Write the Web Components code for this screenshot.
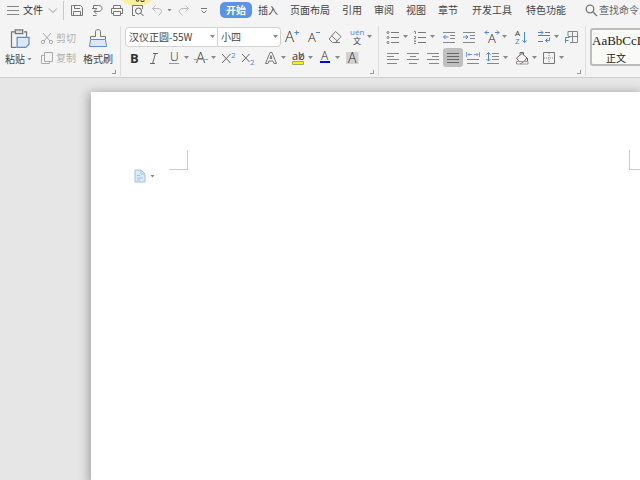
<!DOCTYPE html>
<html lang="zh-CN">
<head>
<meta charset="utf-8">
<title>文字文稿</title>
<style>
html,body{height:100%}
body{margin:0;overflow:hidden;background:#e6e6e6;color:#444;font:10px/16px "Noto Sans CJK SC",sans-serif}
</style>
</head>
<body>
<writer-app></writer-app>
<script>
const L = (d, c = '#777', w = 1) => `<path d="${d}" stroke="${c}" stroke-width="${w}" fill="none"/>`;
const T = (s, x, y, size, c = '#444', extra = '') => `<text x="${x}" y="${y}" font-size="${size}" fill="${c}" font-family="Open Sans,Noto Sans CJK SC,sans-serif" font-weight="300" ${extra}>${s}</text>`;
const BLUE = '#4a86dc';
const ICONS = {
  menu: L('M2 4.5H14M2 8.5H14M2 12.5H14', '#888'),
  chevron: L('M4 6.5L8 10.5L12 6.5', '#999'),
  save: L('M3.5 3.5H11.5L13.5 5.5V13.5H2.5V3.5ZM5.5 3.5V6.5H11M4.5 13V9.500H11.500V13', '#777'),
  exportdoc: L('M4.500 6V3.500H9.500C12 3.500 13 4.800 13 6.500S11.500 9.500 9.500 9.500H5M7.500 7L5 9.500L7.500 12M3 6.500H8M4 13.500H7.500', '#777'),
  print: L('M4.500 6V3.500H11.500V6M4.500 11.500H2.500V6.500H13.500V11.500H11.500M4.500 9.500H11.500V13.500H4.500Z', '#777'),
  preview: L('M6 13.500H3.500V3.500H13.500V7', '#777') + '<circle cx="9.500" cy="9" r="3" fill="none" stroke="#666"/>' + L('M11.700 11.200L14.500 14', '#666'),
  undo: L('M6.500 3.500L3.500 6.500L6.500 9.500M3.500 6.500H9C12 6.500 13.500 9 12 11L9.500 13.500', '#bbb'),
  redo: L('M9.500 3.500L12.500 6.500L9.500 9.500M12.500 6.500H7C4 6.500 2.500 9 4 11L6.500 13.500', '#bbb'),
  more: L('M5 6.500H11', '#777') + L('M5.500 8.500L8 11L10.500 8.500', '#777'),
  search: '<circle cx="7" cy="7" r="3.800" fill="none" stroke="#777" stroke-width="1.300"/>' + L('M9.800 9.800L14 14', '#777', 1.3),
  cut: L('M4 3L11 11M12 3L5 11', '#aaa') + '<g fill="none" stroke="#aaa"><circle cx="4" cy="12" r="1.700"/><circle cx="12" cy="12" r="1.700"/></g>',
  copy: L('M5.500 2.500H13.500V11.500H5.500ZM5 5.500H2.500V13.500H10.500V12', '#aaa'),
  grow: T('A', 2, 13, 15, '#222') + L('M11.500 3.500H16M13.700 1.500V6', BLUE),
  shrink: T('A', 3, 13, 13, '#222') + L('M11 3.500H15', BLUE),
  eraser: L('M8.500 2.500L14 7.500L8.500 13.500H5.500L2 10ZM4.500 6.800L10.300 12M8 13.500H13', '#777'),
  pinyin: T('<tspan x="1" y="6" fill="#4a86dc" font-weight="400">uén</tspan>', 1, 6, 8) + T('文', 4, 15, 8, '#444', 'style="font-weight:400"'),
  bold: T('B', 4, 13, 13, '#333', 'style="font-weight:700"'),
  italic: L('M7 3.500H12M4 13.500H9M9.500 3.500L6.500 13.500', '#666'),
  underline: T('U', 4, 11, 12, '#222') + L('M3 13.500H13', '#8794ea'),
  strike: T('A', 3, 13, 15, '#222') + L('M1 9.500H15', '#e58b72'),
  sup: L('M2 4L10.500 13M10.500 4L2 13', '#666') + T('2', 11, 8, 8, BLUE, 'style="font-weight:400"'),
  sub: L('M2 4L9.500 12M9.500 4L2 12', '#666') + T('2', 10, 15, 8, BLUE, 'style="font-weight:400"'),
  effect: L('M2.500 13.500L7 2.500H9L13.500 13.500H11L10 11H6L5 13.500ZM7 8.500L8 5.500L9 8.500Z', '#777'),
  highlight: '<path d="M2.500 11.500H13.500V14.500H2.500Z" fill="#fff200" stroke="#a8a860"/>' + T('ab', 2, 10, 11, '#333', 'style="font-weight:400"') + L('M13.500 3L9.500 9.500', '#666', 1.3),
  color: T('A', 4, 10, 12, '#222') + '<path d="M3 11H13V13H3Z" fill="#0000f0"/>',
  shade: '<path d="M2 2H14.500V14H2Z" fill="#d2d2d2"/>' + T('A', 4, 13, 14, '#222'),
  bullets: L('M6 3.500H14M6 8.500H14M6 13.500H14') + '<g fill="none" stroke="#777"><circle cx="3" cy="3.500" r="1"/><circle cx="3" cy="8.500" r="1"/><circle cx="3" cy="13.500" r="1"/></g>',
  numbers: L('M6 3.500H14M6 8.500H14M6 13.500H14') + L('M2 2.500H3.500V5M2 7.500H3.500V9.500H2M2 12.500H4M2 14.500H4M3 10.500V13', '#888'),
  outdent: L('M2 3.500H14M9 6.500H14M9 9.500H14M2 13.500H14', '#888') + L('M7.500 8H2.500M4.500 6L2.500 8L4.500 10', BLUE),
  indent: L('M2 3.500H14M9 6.500H14M9 9.500H14M2 13.500H14', '#888') + L('M2 8H7M5 6L7 8L5 10', BLUE),
  scale: T('A', 4, 14, 13, '#222') + L('M1 3.500H5M3 1.500L1 3.500L3 5.500M15 3.500H11M13 1.500L15 3.500L13 5.500', BLUE),
  sort: T('A', 2, 7, 8, '#333', 'style="font-weight:400"') + T('Z', 2, 15, 8, BLUE, 'style="font-weight:400"') + L('M11.500 3V13.500M9.500 11.500L11.500 13.500L13.500 11.500', BLUE),
  breaks: L('M9 3.500H14M2 6.500H14M2 12.500H7') + L('M2 3.500H7M5 1.500L7 3.500L5 5.500M13.500 8.500V11.500H9.500M11.500 9.500L9.500 11.500L11.500 13.500', BLUE),
  table: L('M5 7V2.500H14.500V13.500H7M9.500 2.500V13.500M5 7.500H14.500', '#888') + L('M2.500 14V8.500H6.500M2.500 11.500H5.500', BLUE),
  left: L('M2 3.500H14M2 6.500H9M2 9.500H14M2 13.500H12', '#888'),
  center: L('M2 3.500H14M5 6.500H11M2 9.500H14M4 13.500H12', '#888'),
  right: L('M2 3.500H14M7 6.500H14M2 9.500H14M4 13.500H14', '#888'),
  justify: L('M2 3.500H14M2 6.500H14M2 9.500H14M2 12.500H14', '#666'),
  spread: L('M2 9.500H14M2 13.500H14', '#888') + L('M1.500 2V7M14.500 2V7M3 4.500H7M4.500 3L3 4.500L4.500 6M9 4.500H13M11.500 3L13 4.500L11.500 6', '#6fa0e4'),
  spacing: L('M7 3.500H14M7 6.500H14M7 9.500H14M2 13.500H14', '#888') + L('M3.500 2.500V11M1.500 4.500L3.500 2.500L5.500 4.500M1.500 9L3.500 11L5.500 9', BLUE),
  fill: L('M6 4.500V2.500H9.500V5M2.500 8L8 3.500L13 8L10 11.500H5ZM13.500 8V11', '#666') + L('M2.500 11.500H14V14H2.500Z', '#999') + L('M6 14L10 11.500', '#e26b5b'),
  border: L('M2.500 2.500H13.500V13.500H2.500Z', '#777') + '<path d="M8 3V13M3 8H13" stroke="#888" stroke-dasharray="1 1"/>',
  paste: '<g transform="scale(1.250)">' + L('M5 3H2V15.500H6M12 3H14V7', '#777') + '<path d="M5 1.500H11V4.500H5Z" fill="#ddd" stroke="#777"/><path d="M6.500 7.500H16V13L13.500 15.500H6.500Z" fill="#dce8f8" stroke="#5a8cdc"/></g>',
  painter: '<path d="M2.500 11.500H17.500L18.500 18.500H1.500Z" fill="#dce8f8" stroke="#5a8cdc"/>' + L('M2.500 11V8.500H7.500V3.500C7.500 1 12.500 1 12.500 3.500V8.500H17.500V11', '#777'),
  doc: '<path d="M3 2H9L13 6V14H3Z" fill="#dcebf8" stroke="#9dc0e4"/>' + L('M9 2V6H13M5 7.500H8M5 10H11M5 12H8', '#9dc0e4')
};

function define(name, css, html) {
  customElements.define(name, class extends HTMLElement {
    connectedCallback() {
      if (this.shadowRoot) return;
      const t = document.createElement('template');
      t.innerHTML = `<style>*{box-sizing:border-box}${css}</style>${typeof html === 'function' ? html(this) : html}`;
      this.attachShadow({ mode: 'open' }).append(t.content.cloneNode(true));
    }
  });
}

define('ui-icon', ':host{display:block;flex:none;width:16px;height:16px}:host([large]){width:20px;height:20px}svg{display:block;width:100%;height:100%;overflow:visible}',
  el => `<svg viewBox="0 0 ${el.hasAttribute('large') ? '20 20' : '16 16'}" aria-hidden="true">${ICONS[el.getAttribute('name')]}</svg>`);

define('ui-caret', ':host{display:block;flex:none;width:5px;height:3px;background:#888;clip-path:polygon(0 0,100% 0,50% 100%)}', '');

define('tool-button', `:host{display:block;flex:none}
button{display:flex;align-items:center;width:20px;height:19px;padding:0 2px;border:0;border-radius:3px;background:none}
:host([split]) button{width:27px;padding-right:0;gap:2px}
:host([pressed]) button{background:#bfbfbf}`,
  el => `<button type="button" aria-label="${el.getAttribute('label')}"><ui-icon name="${el.getAttribute('icon')}"></ui-icon>${el.hasAttribute('split') ? '<ui-caret></ui-caret>' : ''}</button>`);

define('label-button', `:host{display:block;flex:none}
button{display:flex;align-items:center;gap:1px;padding:0;border:0;background:none;color:inherit;font:inherit;line-height:20px;white-space:nowrap}
:host([stacked]) button{flex-direction:column;gap:0}
:host([stacked]) ui-icon{margin-bottom:1px}
span{display:flex;align-items:center;gap:2px}
button:disabled{color:#b0b0b0}`,
  el => `<button type="button" ${el.hasAttribute('disabled') ? 'disabled' : ''}><ui-icon name="${el.getAttribute('icon')}" ${el.hasAttribute('stacked') ? 'large' : ''}></ui-icon><span><slot></slot>${el.hasAttribute('split') ? '<ui-caret></ui-caret>' : ''}</span></button>`);

define('ui-combo', `:host{display:flex;align-items:center;background:#fff;border:1px solid #d2d2d2;height:20px}
:host([start]){width:93px;margin-left:1px;border-radius:4px 0 0 4px}
:host([end]){width:63px;border-left:0;border-radius:0 4px 4px 0}
select{appearance:none;flex:1;min-width:0;height:18px;padding:0 0 0 3px;border:0;background:none;color:#444;font:inherit}
ui-caret{margin-right:2px}`,
  el => `<select aria-label="${el.getAttribute('label')}"><option>${el.getAttribute('value')}</option></select><ui-caret></ui-caret>`);

define('tool-row', ':host{display:flex;align-items:center;height:21px}', '<slot></slot>');
define('tool-set', ':host{display:flex;align-items:center}', '<slot></slot>');

define('ribbon-group', `:host{display:flex;flex-direction:column;flex:none;height:50px;border-right:1px solid #dedede}
i{display:block;align-self:flex-end;width:4px;height:4px;margin:2px 4px 0 0;border:solid #999;border-width:0 1px 1px 0}`,
  '<slot></slot><i></i>');

define('ribbon-tab', `:host{display:block;flex:none}
button{display:block;height:16px;padding:0;border:0;border-radius:5px;background:none;color:inherit;font:inherit;line-height:16px;white-space:nowrap}
:host([selected]) button{padding:0 6px;background:#5b93e6;color:#fff;font-weight:700}`,
  el => `<button type="button" role="tab" aria-selected="${el.hasAttribute('selected')}"><slot></slot></button>`);

define('title-bar', `:host{display:flex;align-items:center;height:20px;padding-left:5px;position:relative}
.file{display:flex;align-items:center;gap:2px;padding:0 2px 0 0;height:19px;border:0;border-right:1px solid #c8c8c8;background:none;font:inherit;color:#333;flex:none}
.quick{display:flex;flex:none;position:relative;margin-left:3px}
.tabs{display:flex;flex:none;align-items:center;gap:12px;margin-left:6px}
.first{display:flex;gap:6px}
.wide{display:flex;gap:14px;margin-left:2px}
label{display:flex;align-items:center;flex:1;min-width:0;margin-left:17px}
input{flex:1;min-width:0;width:0;padding:0;border:0;background:none;font:inherit;color:#666}
input::placeholder{color:#666;opacity:1}
.pointer{position:absolute;left:122px;top:0;width:30px;height:6px}`,
`<svg class="pointer" viewBox="0 0 30 6" aria-hidden="true"><path d="M0 0H30C27 4 22 6 15 6S3 4 0 0Z" fill="#f6f0a0"/><path d="M14 0H17L15.500 2ZM19 0V1.500H22V0" fill="none" stroke="#554" /></svg>
<button class="file" type="button"><ui-icon name="menu"></ui-icon>文件<ui-icon name="chevron"></ui-icon></button>
<div class="quick"><tool-button icon="save" label="保存"></tool-button><tool-button icon="exportdoc" label="输出"></tool-button><tool-button icon="print" label="打印"></tool-button><tool-button icon="preview" label="打印预览"></tool-button><tool-button icon="undo" label="撤销" split></tool-button><tool-button icon="redo" label="恢复"></tool-button><tool-button icon="more" label="自定义"></tool-button></div>
<nav class="tabs" role="tablist"><div class="first"><ribbon-tab selected>开始</ribbon-tab><ribbon-tab>插入</ribbon-tab></div><ribbon-tab>页面布局</ribbon-tab><ribbon-tab>引用</ribbon-tab><ribbon-tab>审阅</ribbon-tab><ribbon-tab>视图</ribbon-tab><ribbon-tab>章节</ribbon-tab><div class="wide"><ribbon-tab>开发工具</ribbon-tab><ribbon-tab>特色功能</ribbon-tab></div></nav>
<label><ui-icon name="search"></ui-icon><input type="text" aria-label="查找命令" placeholder="查找命令..."></label>`);

const b = (icon, label, attr = '') => `<tool-button icon="${icon}" label="${label}" ${attr}></tool-button>`;

define('home-ribbon', `:host{display:flex;align-items:flex-start;padding:6px 0 1px}
.clip{display:flex;gap:7px;width:120px;padding:2px 0 0 5px;height:42px}
.stack{display:flex;flex-direction:column}
.font{width:257px;padding-left:3px}
.para{width:206px;padding-left:4px}
.edit{display:flex;gap:2px}
.gap{margin-left:3px}.gap2{margin-left:2px}
.style{flex:1;min-width:0;height:38px;margin:2px 0 0 4px;padding:2px 0 0;overflow:hidden;border:2px solid #bcbcbc;border-right:0;border-radius:3px 0 0 3px;background:#fafaf7;color:#222;font:inherit;text-align:left}
.style b{display:block;font:13px/18px "Liberation Serif",serif}
.style span{display:block;padding-left:14px;line-height:16px}`,
`<ribbon-group><div class="clip"><label-button stacked split icon="paste">粘贴</label-button><div class="stack"><label-button icon="cut" disabled>剪切</label-button><label-button icon="copy" disabled>复制</label-button></div><label-button stacked icon="painter">格式刷</label-button></div></ribbon-group>
<ribbon-group><div class="font">
<tool-row><ui-combo start label="字体" value="汉仪正圆-55W"></ui-combo><ui-combo end label="字号" value="小四"></ui-combo><div class="edit">${b('grow', '增大字号')}${b('shrink', '减小字号')}${b('eraser', '清除格式')}${b('pinyin', '拼音指南', 'split')}</div></tool-row>
<tool-row>${b('bold', '加粗')}${b('italic', '倾斜')}${b('underline', '下划线', 'split')}${b('strike', '删除线', 'split')}${b('sup', '上标')}${b('sub', '下标')}<tool-set class="gap">${b('effect', '文字效果', 'split')}${b('highlight', '突出显示', 'split')}${b('color', '字体颜色', 'split')}${b('shade', '字符底纹')}</tool-set></tool-row>
</div></ribbon-group>
<ribbon-group><div class="para">
<tool-row>${b('bullets', '项目符号', 'split')}${b('numbers', '编号', 'split')}<tool-set class="gap2">${b('outdent', '减少缩进')}${b('indent', '增加缩进')}</tool-set><tool-set class="gap">${b('scale', '中文版式', 'split')}</tool-set><tool-set class="gap2">${b('sort', '排序')}</tool-set><tool-set class="gap">${b('breaks', '显示段落标记', 'split')}${b('table', '制表位')}</tool-set></tool-row>
<tool-row>${b('left', '左对齐')}${b('center', '居中')}${b('right', '右对齐')}${b('justify', '两端对齐', 'pressed')}${b('spread', '分散对齐')}${b('spacing', '行距', 'split')}<tool-set class="gap2">${b('fill', '底纹颜色', 'split')}${b('border', '边框', 'split')}</tool-set></tool-row>
</div></ribbon-group>
<button class="style" type="button"><b>AaBbCcD</b><span>正文</span></button>`);

define('document-page', `:host{display:block;flex:1;margin:14px 0 0 91px;background:#fff;box-shadow:0 3px 10px 2px rgba(0,0,0,.32)}
.marks{display:flex;justify-content:space-between;padding:58px 0 0 78px}
.marks i{width:19px;height:20px;border:solid #ccc;border-width:0 1px 1px 0}
.marks i:last-child{width:11px;border-width:0 0 1px 1px}
button{display:flex;align-items:center;gap:2px;margin:-2px 0 0 41px;padding:0;border:0;background:none}`,
`<div class="marks"><i></i><i></i></div><button type="button" aria-label="段落布局"><ui-icon name="doc"></ui-icon><ui-caret></ui-caret></button>`);

define('writer-app', `:host{display:flex;flex-direction:column;height:100vh;overflow:hidden}
header{background:#f4f4f4;border-bottom:1px solid #cfcfcf}
main{display:flex;flex:1;overflow:hidden}`,
`<header><title-bar></title-bar><home-ribbon></home-ribbon></header><main><document-page></document-page></main>`);
</script>
</body>
</html>
